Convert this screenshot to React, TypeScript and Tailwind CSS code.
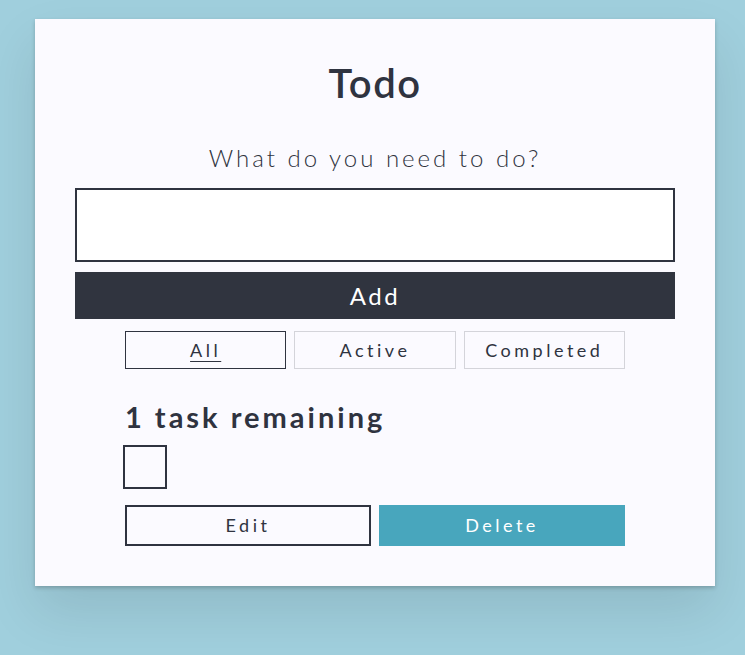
import { useState } from "react";

const filters = ["All", "Active", "Completed"];

export default function App() {
  const [filter, setFilter] = useState("All");
  const [text, setText] = useState("");

  return (
    <div
      className="min-h-screen bg-[#a0cfdd] pt-[19px] text-[#2f3340]"
      style={{ fontFamily: "Lato, 'Noto Sans', sans-serif" }}
    >
      <div className="ml-[35px] w-[680px] h-[567px] bg-[#fbfaff] px-10 pt-[40px] shadow-[0_2px_4px_rgba(0,0,0,0.2),0_25px_50px_rgba(0,0,0,0.1)]">
        <h1 className="text-center text-[40px] leading-[48px] font-semibold tracking-[1.5px]">Todo</h1>

        <label className="mt-[35px] block text-center text-[24px] leading-[32px] font-light tracking-[3px]">
          What do you need to do?
        </label>
        <input
          value={text}
          onChange={(e) => setText(e.target.value)}
          className="mt-[14px] block w-full h-[74px] border-2 border-[#2f3340] bg-white px-2 text-2xl outline-none"
        />
        <button
          type="button"
          className="mt-[10px] w-full h-[47px] bg-[#30343f] text-white text-[24px] tracking-[2.5px]"
        >
          Add
        </button>

        <div className="mx-auto mt-3 grid w-[500px] grid-cols-3 gap-2">
          {filters.map((f) => (
            <button
              key={f}
              type="button"
              onClick={() => setFilter(f)}
              className={`h-[38px] border text-[18px] tracking-[3.5px] ${
                filter === f ? "border-[#2f3340] underline underline-offset-4" : "border-[#d4d4da]"
              }`}
            >
              {f}
            </button>
          ))}
        </div>

        <div className="mx-auto w-[500px]">
          <h2 className="mt-[30px] text-[29px] leading-[36px] font-bold tracking-[3px]">1 task remaining</h2>
          <div className="mt-[10px] -ml-[2px] h-[44px] w-[44px] border-2 border-[#2f3340] bg-[#fbfaff]" />
          <div className="mt-[16px] grid grid-cols-2 gap-2">
            <button
              type="button"
              className="h-[41px] border-2 border-[#2f3340] text-[18px] tracking-[3.5px]"
            >
              Edit
            </button>
            <button
              type="button"
              className="h-[41px] bg-[#48a6bd] text-white text-[18px] tracking-[3.5px]"
            >
              Delete
            </button>
          </div>
        </div>
      </div>
    </div>
  );
}
